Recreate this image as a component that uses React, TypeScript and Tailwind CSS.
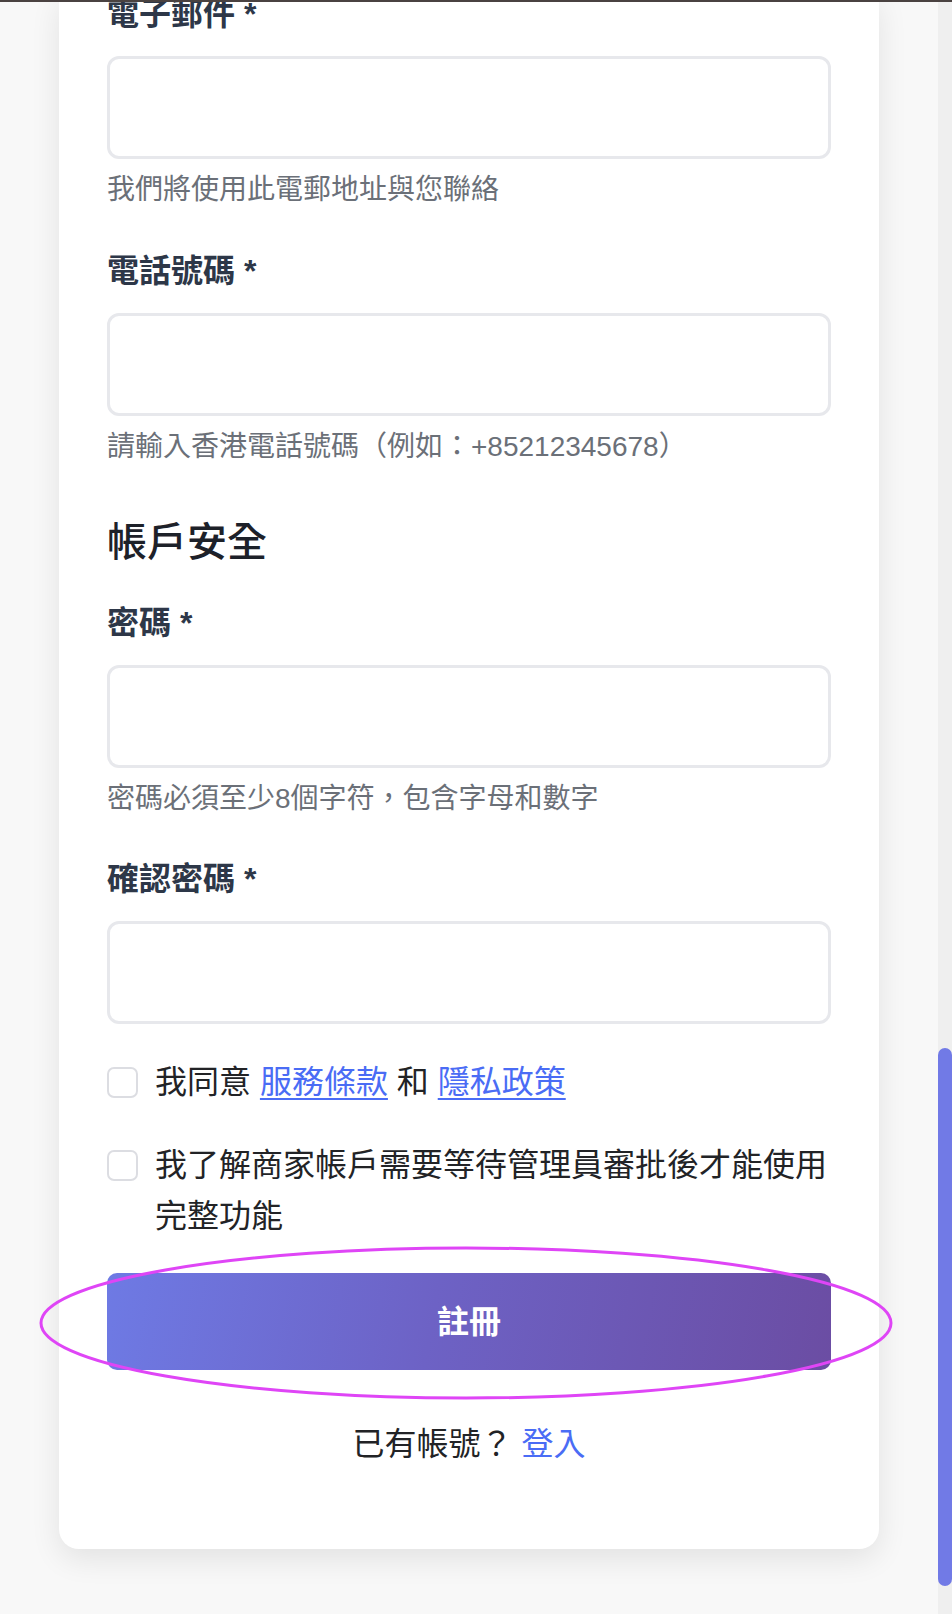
import React from "react";

const font = { fontFamily: '"Liberation Sans", "Noto Sans CJK TC", sans-serif' };

function Field({ label, helper, first }: { label: string; helper?: string; first?: boolean }) {
  return (
    <div className={first ? "-mt-[6px]" : ""}>
      <div className="text-[32px] leading-[40px] font-bold text-[#2d3748]">{label}</div>
      <div className="mt-[22px] h-[103px] rounded-[12px] border-[3px] border-[#e7e8ec] bg-white" />
      {helper && (
        <div className="mt-[13px] text-[28px] leading-[36px] text-[#6b7078]">{helper}</div>
      )}
    </div>
  );
}

export default function App() {
  return (
    <div className="relative w-[952px] h-[1614px] overflow-hidden bg-[#f8f8f8]" style={font}>
      <div className="flex h-full">
        <main className="flex-1 px-[59px]">
          <div className="bg-white rounded-b-[20px] shadow-[0_10px_30px_rgba(0,0,0,0.09)] px-[48px] pb-[85px]">
            <Field first label="電子郵件 *" helper="我們將使用此電郵地址與您聯絡" />
            <div className="mt-[43px]">
              <Field label="電話號碼 *" helper="請輸入香港電話號碼（例如：+85212345678）" />
            </div>
            <h2 className="mt-[52px] text-[40px] leading-[50px] font-medium text-[#1d2129]">帳戶安全</h2>
            <div className="mt-[36px]">
              <Field label="密碼 *" helper="密碼必須至少8個字符，包含字母和數字" />
            </div>
            <div className="mt-[42px]">
              <Field label="確認密碼 *" />
            </div>

            <div className="mt-[33px] flex items-start gap-[17px]">
              <div className="mt-[10px] w-[31px] h-[31px] shrink-0 rounded-[7px] border-2 border-[#dcdde2] bg-white" />
              <div className="text-[32px] leading-[51px] text-[#222326]">
                我同意{" "}
                <span className="text-[#4a6cf5] underline underline-offset-[5px] decoration-2">服務條款</span>{" "}
                和{" "}
                <span className="text-[#4a6cf5] underline underline-offset-[5px] decoration-2">隱私政策</span>
              </div>
            </div>
            <div className="mt-[32px] flex items-start gap-[17px]">
              <div className="mt-[10px] w-[31px] h-[31px] shrink-0 rounded-[7px] border-2 border-[#dcdde2] bg-white" />
              <div className="text-[32px] leading-[51px] text-[#222326]">
                我了解商家帳戶需要等待管理員審批後才能使用完整功能
              </div>
            </div>

            <button className="mt-[31px] w-full h-[97px] rounded-[10px] bg-[linear-gradient(100deg,#6e7ae4_0%,#6d62c5_45%,#6b4da3_100%)] text-white text-[32px] font-bold flex items-center justify-center">
              註冊
            </button>

            <div className="mt-[54px] text-center text-[32px] leading-[40px] text-[#222326]">
              已有帳號？ <span className="text-[#4a6cf5]">登入</span>
            </div>
          </div>
        </main>
        <aside className="w-[14px] bg-[#efefef] flex flex-col">
          <div className="h-[1048px]" />
          <div className="h-[538px] rounded-full bg-[#717ae6]" />
        </aside>
      </div>

      <div className="absolute left-0 top-0 w-full h-[2px] bg-[#4a4241]" />

      <svg className="absolute left-0 top-0 pointer-events-none" width="952" height="1614">
        <ellipse cx="466" cy="1323" rx="425" ry="75" fill="none" stroke="#df45f6" strokeWidth="3" />
      </svg>
    </div>
  );
}
